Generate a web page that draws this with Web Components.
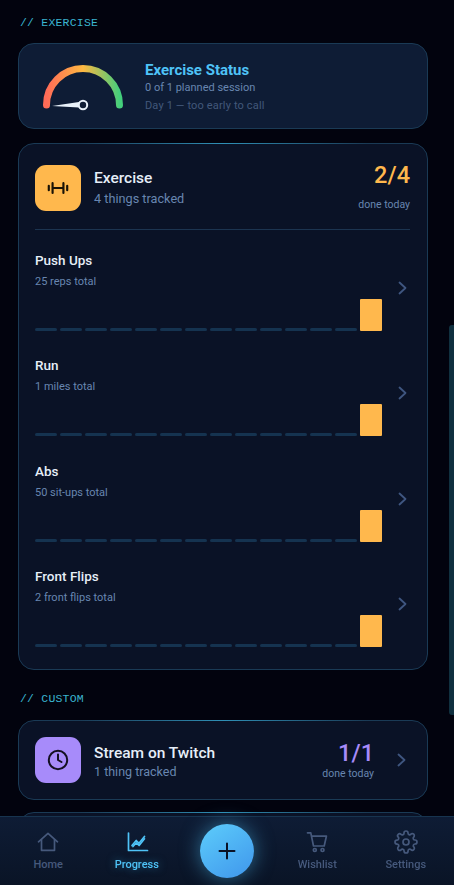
<!DOCTYPE html>
<html lang="en">
<head>
<meta charset="utf-8">
<title>Progress</title>
<style>
  html, body { margin: 0; height: 100%; background: #02030e; }
  body { font-family: Roboto, "Liberation Sans", sans-serif; overflow: hidden; }
</style>
</head>
<body>
<progress-screen>
  <section-label>// EXERCISE</section-label>
  <status-card title="Exercise Status" line1="0 of 1 planned session" line2="Day 1 — too early to call"></status-card>
  <habit-group name="Exercise" sub="4 things tracked" count="2/4">
    <habit-row name="Push Ups" sub="25 reps total"></habit-row>
    <habit-row name="Run" sub="1 miles total"></habit-row>
    <habit-row name="Abs" sub="50 sit-ups total"></habit-row>
    <habit-row name="Front Flips" sub="2 front flips total"></habit-row>
  </habit-group>
  <section-label class="second">// CUSTOM</section-label>
  <custom-card name="Stream on Twitch" sub="1 thing tracked" count="1/1"></custom-card>
  <custom-card class="next"></custom-card>
</progress-screen>
<bottom-nav>
  <nav-item label="Home" icon="home"></nav-item>
  <nav-item label="Progress" icon="chart" active></nav-item>
  <add-button></add-button>
  <nav-item label="Wishlist" icon="cart"></nav-item>
  <nav-item label="Settings" icon="gear"></nav-item>
</bottom-nav>

<script>
const MONO = '"Liberation Mono", "DejaVu Sans Mono", monospace';

const ICONS = {
  home: '<path d="M2.500 11.800 12 3.300l9.500 8.500"/><path d="M5.500 9.600V20.300h13V9.600"/>',
  chart: '<path d="M3.500 3v17.500h19"/><path d="M7 15.500l4.200-5 2.800 2.800 5.500-6.800"/><path d="M8 16.500l3.300-3.700 2.800 2.700 5.400-6.700"/>',
  cart: '<path d="M2.500 2.800h3.300l2.700 13.200h10.700l2.200-9.800H6.500"/><circle cx="9.800" cy="20" r="1.500"/><circle cx="17.500" cy="20" r="1.500"/>',
  gear: '<circle cx="12" cy="12" r="3"/><path d="M19.400 15a1.650 1.650 0 0 0 .33 1.820l.06.06a2 2 0 1 1-2.830 2.830l-.06-.06a1.650 1.650 0 0 0-1.820-.33 1.650 1.650 0 0 0-1 1.510V21a2 2 0 1 1-4 0v-.09A1.650 1.650 0 0 0 9 19.400a1.650 1.650 0 0 0-1.820.33l-.06.06a2 2 0 1 1-2.830-2.830l.06-.06a1.650 1.650 0 0 0 .33-1.820 1.650 1.650 0 0 0-1.510-1H3a2 2 0 1 1 0-4h.09A1.650 1.650 0 0 0 4.600 9a1.650 1.650 0 0 0-.33-1.820l-.06-.06a2 2 0 1 1 2.830-2.830l.06.06a1.650 1.650 0 0 0 1.820.33H9a1.650 1.650 0 0 0 1-1.510V3a2 2 0 1 1 4 0v.09a1.650 1.650 0 0 0 1 1.510 1.650 1.650 0 0 0 1.820-.33l.06-.06a2 2 0 1 1 2.830 2.830l-.06.06a1.650 1.650 0 0 0-.33 1.820V9a1.650 1.650 0 0 0 1.510 1H21a2 2 0 1 1 0 4h-.09a1.650 1.650 0 0 0-1.510 1z"/>'
};

const CHEVRON = '<svg width="9" height="14" viewBox="0 0 9 14" fill="none" stroke="#3f5680" stroke-width="1.800" stroke-linecap="round" stroke-linejoin="round"><path d="M1.500 1.500 7.500 7l-6 5.500"/></svg>';

class ProgressScreen extends HTMLElement {
  constructor() {
    super();
    this.attachShadow({ mode: 'open' }).innerHTML = `
      <style>
        :host { display: block; height: 885px; box-sizing: border-box; padding: 16px 26px 0 18px; overflow: hidden; background: #02030e; }
        .thumb { position: absolute; right: 0; top: 325px; width: 5px; height: 390px; background: #10303f; border-radius: 3px 0 0 3px; }
      </style>
      <slot></slot>
      <div class="thumb"></div>`;
  }
}

class SectionLabel extends HTMLElement {
  constructor() {
    super();
    this.attachShadow({ mode: 'open' }).innerHTML = `
      <style>
        :host { display: block; padding-left: 2px; font: 400 11.500px/14px ${MONO}; letter-spacing: 0.200px; color: #3ab4d0; }
        :host(.second) { margin-top: 22px; }
      </style>
      <slot></slot>`;
  }
}

class StatusCard extends HTMLElement {
  constructor() {
    super();
    this.attachShadow({ mode: 'open' }).innerHTML = `
      <style>
        :host { display: flex; align-items: center; gap: 21px; box-sizing: border-box; height: 86px; margin-top: 13px; padding: 0 0 0 23px; border: 1px solid #1a3a55; border-radius: 16px; background: #0e1c35; }
        .text { padding-top: 3px; }
        .t { font-size: 15px; font-weight: 700; color: #4fc3f7; line-height: 18px; margin-top: 1px; }
        .a { font-size: 11px; color: #6886b0; line-height: 18px; }
        .b { font-size: 11px; color: #42587a; line-height: 18px; letter-spacing: .15px; }
        svg { display: block; flex: none; }
      </style>
      <svg width="82" height="50" viewBox="0 0 82 50" fill="none">
        <defs>
          <linearGradient id="g" x1="0" y1="0" x2="1" y2="0">
            <stop offset="0" stop-color="#ff6b57"/>
            <stop offset=".5" stop-color="#fdb842"/>
            <stop offset="1" stop-color="#44cf7c"/>
          </linearGradient>
        </defs>
        <path d="M4.500 44a36.500 36.500 0 0 1 73 0" stroke="url(#g)" stroke-width="7" stroke-linecap="round"/>
        <path d="M10 45 37 41V46.500z" fill="#e8f1fa"/>
        <circle cx="41" cy="44" r="4.200" fill="#0e1c35" stroke="#e8f1fa" stroke-width="2"/>
      </svg>
      <div class="text">
        <div class="t">${this.getAttribute('title')}</div>
        <div class="a">${this.getAttribute('line1')}</div>
        <div class="b">${this.getAttribute('line2')}</div>
      </div>`;
  }
}

class HabitGroup extends HTMLElement {
  constructor() {
    super();
    this.attachShadow({ mode: 'open' }).innerHTML = `
      <style>
        :host { display: block; box-sizing: border-box; height: 527px; margin-top: 14px; padding: 21px 17px 0 16px; position: relative; border: 1px solid #1a3a55; border-radius: 16px; background: #0a1226; }
        .glow { position: absolute; left: 60px; right: 60px; top: -1px; height: 1px; background: linear-gradient(90deg, transparent, #2f8fb5, transparent); }
        header { display: flex; gap: 13px; height: 64px; border-bottom: 1px solid #1c3450; margin-bottom: 22px; align-items: flex-start; }
        .icon { width: 46px; height: 46px; border-radius: 11px; background: #ffb84d; display: grid; place-items: center; flex: none; }
        .text { flex: 1; padding-top: 3px; }
        .n { font-size: 15.500px; font-weight: 500; color: #e6eef8; line-height: 20px; }
        .s { font-size: 12.700px; color: #6886b0; line-height: 18px; margin-top: 2px; }
        .r { text-align: right; margin-top: -4px; }
        .c { font-size: 23.500px; line-height: 28px; font-weight: 500; color: #ffb84d; }
        .d { font-size: 10.500px; color: #6886b0; line-height: 14px; margin-top: 9px; }
        main { display: flex; flex-direction: column; }
      </style>
      <div class="glow"></div>
      <header>
        <div class="icon">
          <svg width="26" height="26" viewBox="0 0 24 24" fill="none" stroke="#1a1306" stroke-width="2" stroke-linecap="round"><path d="M7 12h10M7 7.500v9M17 7.500v9M3.500 10v4M20.500 10v4"/></svg>
        </div>
        <div class="text">
          <div class="n">${this.getAttribute('name')}</div>
          <div class="s">${this.getAttribute('sub')}</div>
        </div>
        <div class="r">
          <div class="c">${this.getAttribute('count')}</div>
          <div class="d">done today</div>
        </div>
      </header>
      <main><slot></slot></main>`;
  }
}

class BarChart extends HTMLElement {
  constructor() {
    super();
    const dashes = Array.from({ length: 13 }, () => '<i></i>').join('');
    this.attachShadow({ mode: 'open' }).innerHTML = `
      <style>
        :host { display: flex; align-items: flex-end; gap: 3px; height: 32px; }
        i { display: block; width: 22px; height: 3px; border-radius: 2px; background: #153350; }
        b { display: block; width: 22px; height: 32px; border-radius: 1px; background: #ffb84d; }
      </style>
      ${dashes}<b></b>`;
  }
}
customElements.define('bar-chart', BarChart);

class HabitRow extends HTMLElement {
  constructor() {
    super();
    this.attachShadow({ mode: 'open' }).innerHTML = `
      <style>
        :host { display: grid; grid-template-columns: 1fr 29px; height: 105.330px; box-sizing: border-box; }
        .n { font-size: 13.500px; font-weight: 500; color: #e6eef8; line-height: 16px; }
        .s { font-size: 11px; color: #6886b0; line-height: 14px; margin-top: 7px; margin-bottom: 10px; }
        .ch { display: flex; align-items: flex-start; justify-content: flex-end; padding-top: 29px; }
        .ch svg { margin-right: 4px; }
      </style>
      <div>
        <div class="n">${this.getAttribute('name')}</div>
        <div class="s">${this.getAttribute('sub')}</div>
        <bar-chart></bar-chart>
      </div>
      <div class="ch">${CHEVRON}</div>`;
  }
}

class CustomCard extends HTMLElement {
  constructor() {
    super();
    const name = this.getAttribute('name');
    this.attachShadow({ mode: 'open' }).innerHTML = `
      <style>
        :host { display: flex; align-items: center; gap: 13px; box-sizing: border-box; height: 80px; margin-top: 14px; padding: 0 21px 0 16px; position: relative; border: 1px solid #1a3a55; border-radius: 16px; background: #0a1226; }
        :host(.next) { margin-top: 12px; }
        .glow { position: absolute; left: 60px; right: 60px; top: -1px; height: 1px; background: linear-gradient(90deg, transparent, #2f8fb5, transparent); }
        .icon { width: 46px; height: 46px; border-radius: 11px; background: #a78bfa; display: grid; place-items: center; flex: none; }
        .text { flex: 1; padding-top: 3px; }
        .n { font-size: 15.500px; font-weight: 500; color: #e6eef8; line-height: 19px; }
        .s { font-size: 12.500px; color: #6886b0; line-height: 17px; }
        .r { text-align: right; margin-right: 10px; padding-top: 1px; }
        .c { font-size: 23.500px; line-height: 27px; font-weight: 500; color: #a78bfa; }
        .d { font-size: 10.500px; color: #6886b0; line-height: 14px; }
      </style>
      <div class="glow"></div>
      ${name ? `
      <div class="icon">
        <svg width="24" height="24" viewBox="0 0 24 24" fill="none" stroke="#141022" stroke-width="2" stroke-linecap="round" stroke-linejoin="round"><circle cx="12" cy="12" r="9.200"/><path d="M12 6.500V12l3.500 2"/></svg>
      </div>
      <div class="text">
        <div class="n">${name}</div>
        <div class="s">${this.getAttribute('sub')}</div>
      </div>
      <div class="r">
        <div class="c">${this.getAttribute('count')}</div>
        <div class="d">done today</div>
      </div>
      ${CHEVRON}` : ''}`;
  }
}

class BottomNav extends HTMLElement {
  constructor() {
    super();
    this.attachShadow({ mode: 'open' }).innerHTML = `
      <style>
        :host { position: fixed; left: 0; right: 0; bottom: 0; height: 69px; display: grid; grid-template-columns: 1fr 1fr 92px 1fr 1fr; padding: 0 4px; box-sizing: border-box; border-top: 1px solid #17344f; background: linear-gradient(180deg, #0e1c35, #0a1426); }
      </style>
      <slot></slot>`;
  }
}

class NavItem extends HTMLElement {
  constructor() {
    super();
    const active = this.hasAttribute('active');
    this.attachShadow({ mode: 'open' }).innerHTML = `
      <style>
        :host { display: flex; flex-direction: column; align-items: center; padding-top: 13px; color: #46597c; }
        :host([active]) { color: #4fc3f7; }
        svg { display: block; }
        span { margin-top: 4px; font-size: 11px; font-weight: 500; line-height: 14px; ${active ? 'text-shadow: 0 0 8px rgba(79,195,247,.5);' : ''} }
      </style>
      <svg width="24" height="24" viewBox="0 0 24 24" fill="none" stroke="currentColor" stroke-width="1.700" stroke-linecap="round" stroke-linejoin="round">${ICONS[this.getAttribute('icon')]}</svg>
      <span>${this.getAttribute('label')}</span>`;
  }
}

class AddButton extends HTMLElement {
  constructor() {
    super();
    this.attachShadow({ mode: 'open' }).innerHTML = `
      <style>
        :host { display: flex; justify-content: center; padding-top: 7px; }
        div { width: 54px; height: 54px; border-radius: 50%; display: grid; place-items: center; background: linear-gradient(145deg, #5dcdfb, #3f96ec); box-shadow: 0 0 20px rgba(79,195,247,.5); }
      </style>
      <div><svg width="20" height="20" viewBox="0 0 20 20" fill="none" stroke="#0a1226" stroke-width="2" stroke-linecap="round"><path d="M10 2.500v15M2.500 10h15"/></svg></div>`;
  }
}

customElements.define('progress-screen', ProgressScreen);
customElements.define('section-label', SectionLabel);
customElements.define('status-card', StatusCard);
customElements.define('habit-group', HabitGroup);
customElements.define('habit-row', HabitRow);
customElements.define('custom-card', CustomCard);
customElements.define('bottom-nav', BottomNav);
customElements.define('nav-item', NavItem);
customElements.define('add-button', AddButton);
</script>
</body>
</html>
